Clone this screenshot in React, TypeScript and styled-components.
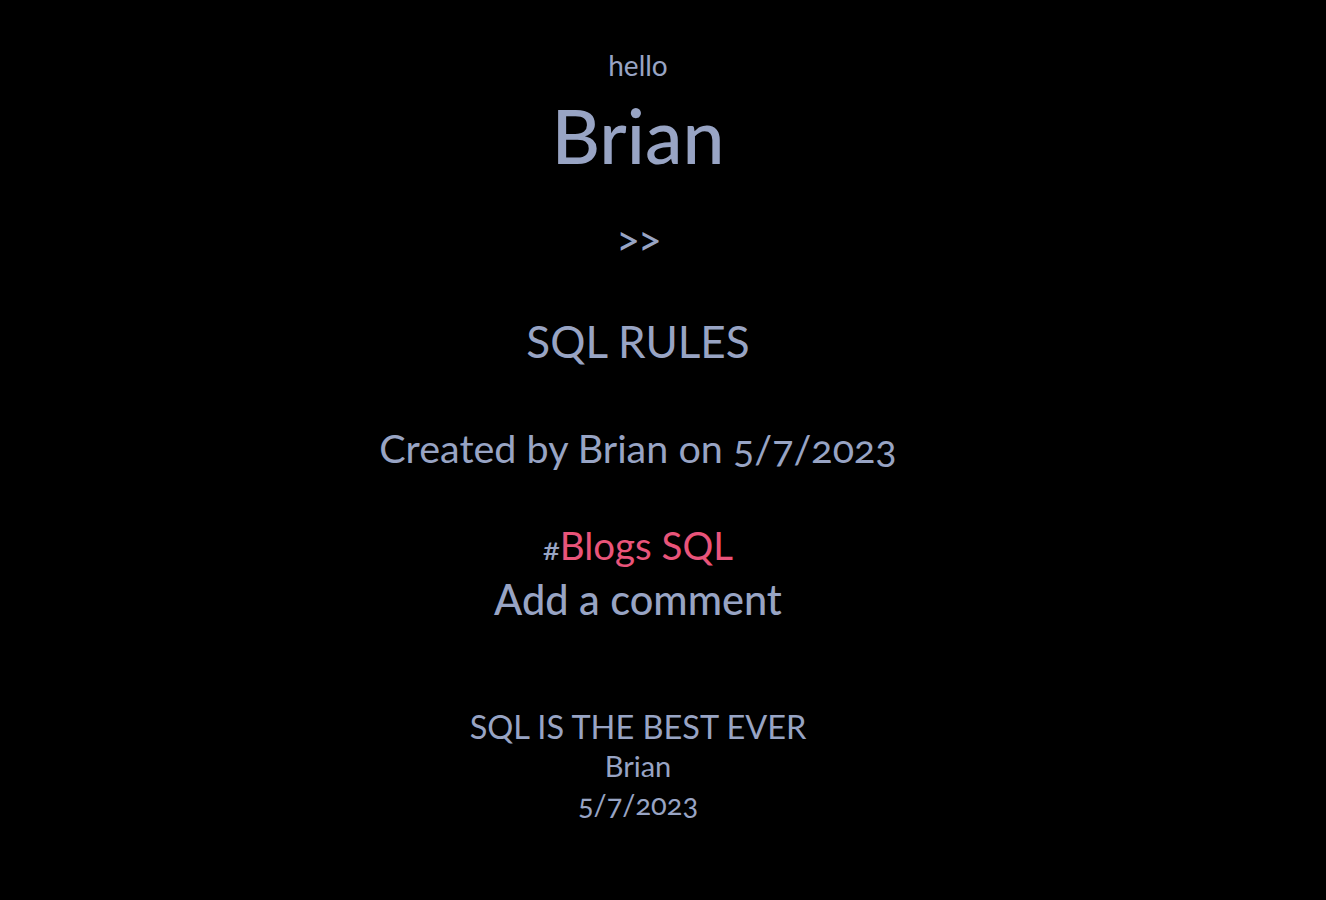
import React from "react";
import styled, { createGlobalStyle } from "styled-components";

const Slate = "#98a4c4";
const Rose = "#e9547a";

const GlobalStyle = createGlobalStyle`
  html, body {
    margin: 0;
    padding: 0;
    background: #000000;
  }
  body {
    font-family: "Lato", "Open Sans", sans-serif;
    font-variant-numeric: oldstyle-nums;
    color: ${Slate};
  }
`;

const Page = styled.main`
  display: flex;
  flex-direction: column;
  align-items: center;
  min-height: 900px;
  padding: 46px 50px 0 0;
  box-sizing: border-box;
  text-align: center;
`;

const Greeting = styled.div`
  font-size: 28px;
  line-height: 38px;
`;

const UserName = styled.h1`
  margin: 5px 0 0;
  font-size: 75px;
  font-weight: 500;
  line-height: 92px;
`;

const NextLink = styled.a`
  margin-top: 36px;
  font-size: 44px;
  line-height: 40px;
  letter-spacing: -2px;
  color: ${Slate};
  text-decoration: none;
  cursor: pointer;
`;

const PostTitle = styled.h2`
  margin: 59px 0 0;
  font-size: 44px;
  font-weight: 400;
  line-height: 50px;
`;

const PostMeta = styled.p`
  margin: 57px 0 0;
  font-size: 39.5px;
  line-height: 50px;
`;

const TagRow = styled.div`
  margin-top: 48px;
  font-size: 38.5px;
  line-height: 48px;
`;

const Hash = styled.span`
  font-size: 31px;
  color: ${Slate};
`;

const Tag = styled.span`
  color: ${Rose};
`;

const CommentHeading = styled.h3`
  margin: 2px 0 0;
  font-size: 41.5px;
  font-weight: 500;
  line-height: 50px;
`;

const CommentList = styled.ul`
  list-style: none;
  margin: 83px 0 0;
  padding: 0;
`;

const Comment = styled.li`
  display: flex;
  flex-direction: column;
  align-items: center;
`;

const CommentText = styled.span`
  font-size: 32.5px;
  line-height: 40px;
`;

const CommentLine = styled.span`
  font-size: 29px;
  line-height: 38px;
`;

const comments = [{ text: "SQL IS THE BEST EVER", author: "Brian", date: "5/7/2023" }];

export default function App() {
  return (
    <>
      <GlobalStyle />
      <Page>
        <Greeting>hello</Greeting>
        <UserName>Brian</UserName>
        <NextLink>&gt;&gt;</NextLink>
        <PostTitle>SQL RULES</PostTitle>
        <PostMeta>Created by Brian on 5/7/2023</PostMeta>
        <TagRow>
          <Hash>#</Hash>
          <Tag>Blogs SQL</Tag>
        </TagRow>
        <CommentHeading>Add a comment</CommentHeading>
        <CommentList>
          {comments.map((c) => (
            <Comment key={c.text}>
              <CommentText>{c.text}</CommentText>
              <CommentLine>{c.author}</CommentLine>
              <CommentLine>{c.date}</CommentLine>
            </Comment>
          ))}
        </CommentList>
      </Page>
    </>
  );
}
